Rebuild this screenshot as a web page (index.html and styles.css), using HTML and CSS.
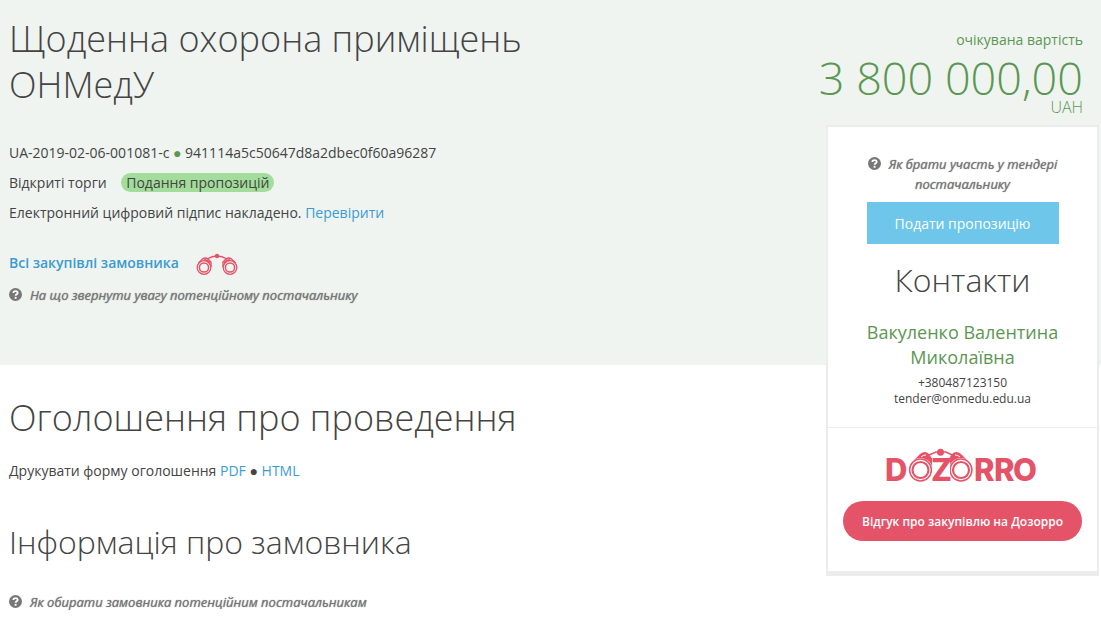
FILE: index.html
```html
<!DOCTYPE html>
<html lang="uk">
<head>
    <meta charset="UTF-8">
    <meta name="viewport" content="width=device-width, initial-scale=1.0">
    <title>Щоденна охорона приміщень ОНМедУ</title>
    <link rel="stylesheet" href="styles.css">
</head>
<body>
    <!-- shared icons -->
    <svg class="sprite" aria-hidden="true">
        <symbol id="question" viewBox="0 0 12 12">
            <circle cx="6" cy="6" r="6" fill="#777"/>
            <path d="M4 4.700C4 2.200 8 2.300 8 4.500C8 5.800 6.100 5.700 6.100 7.200" fill="none" stroke="#fff" stroke-width="1.700"/>
            <rect x="5.200" y="8.200" width="1.800" height="1.700" fill="#fff"/>
        </symbol>
    </svg>

    <main class="tender">
        <header class="hero">
            <div class="hero-main">
                <h1>Щоденна охорона приміщень ОНМедУ</h1>
                <ul class="details">
                    <li>UA-2019-02-06-001081-c <span class="dot">●</span> 941114a5c50647d8a2dbec0f60a96287</li>
                    <li>Відкриті торги <span class="status">Подання пропозицій</span></li>
                    <li>Електронний цифровий підпис накладено. <a href="#">Перевірити</a></li>
                </ul>
                <div class="customer">
                    <a href="#">Всі закупівлі замовника</a>
                    <svg class="binoculars" viewBox="0 0 42 24" fill="none" stroke="#e55368">
                        <circle cx="8" cy="14.500" r="6.800" stroke-width="1.300"/>
                        <circle cx="8" cy="14.500" r="4.600" stroke-width="1.500"/>
                        <circle cx="34" cy="14.500" r="6.800" stroke-width="1.300"/>
                        <circle cx="34" cy="14.500" r="4.600" stroke-width="1.500"/>
                        <path d="M2.500 10L6.500 6Q9 4 12 6L15 9V14M39.500 10L35.500 6Q33 4 30 6L27 9V14" stroke-width="1.400"/>
                        <path d="M8 7Q11 6 14 10M34 7Q31 6 28 10" stroke-width="1.800"/>
                        <path d="M11 6Q16 3 21 3T31 6" stroke-width="1.300"/>
                        <circle cx="21" cy="3" r="2.200" fill="#e55368" stroke="none"/>
                    </svg>
                </div>
                <a class="hint" href="#"><svg class="icon"><use href="#question"/></svg>На що звернути увагу потенційному постачальнику</a>
            </div>
        </header>

        <aside class="side">
            <div class="price">
                <div class="price-label">очікувана вартість</div>
                <div class="price-value">3 800 000,00</div>
                <div class="price-currency">UAH</div>
            </div>
            <div class="card">
                <div class="card-top">
                    <a class="hint" href="#"><svg class="icon"><use href="#question"/></svg>Як брати участь у тендері постачальнику</a>
                    <button class="btn-offer" type="button">Подати пропозицію</button>
                    <h3>Контакти</h3>
                    <p class="person">Вакуленко Валентина Миколаївна</p>
                    <p class="contact">+380487123150<br>tender@onmedu.edu.ua</p>
                </div>
                <div class="card-bottom">
                    <svg class="dozorro" viewBox="0 0 154 35" role="img" aria-label="Dozorro">
                        <path d="M24 16L34 6Q39 2 43 6L47 12V22H35ZM85 16L75 6Q70 2 66 6L62 12V22H75Z" fill="#e55368"/>
                        <circle cx="34.500" cy="22" r="12" fill="#fff"/>
                        <circle cx="75" cy="22" r="12" fill="#fff"/>
                        <g fill="none" stroke="#e55368">
                            <circle cx="34.500" cy="22" r="10.900" stroke-width="1.500"/>
                            <circle cx="34.500" cy="22" r="8" stroke-width="2.200"/>
                            <circle cx="75" cy="22" r="10.900" stroke-width="1.500"/>
                            <circle cx="75" cy="22" r="8" stroke-width="2.200"/>
                            <path d="M43 7L50 4H60L66 7" stroke-width="1.500"/>
                        </g>
                        <path d="M35 9Q37 7 40 7M74 9Q72 7 69 7" fill="none" stroke="#fff"/>
                        <circle cx="54.500" cy="4.200" r="3.500" fill="#e55368"/>
                        <path d="M46 11H64V34H46Z" fill="#fff"/>
                        <g class="dozorro-text">
                            <text x="-1" y="33">D</text>
                            <text x="45" y="33">Z</text>
                            <text x="88" y="33">R</text>
                            <text x="108" y="33">R</text>
                            <text x="127" y="33">O</text>
                        </g>
                    </svg>
                    <button class="btn-review" type="button">Відгук про закупівлю на Дозорро</button>
                </div>
            </div>
        </aside>

        <div class="content">
            <section>
                <h2>Оголошення про проведення</h2>
                <p>Друкувати форму оголошення <a href="#">PDF</a> ● <a href="#">HTML</a></p>
            </section>
            <section>
                <h3>Інформація про замовника</h3>
                <a class="hint" href="#"><svg class="icon"><use href="#question"/></svg>Як обирати замовника потенційним постачальникам</a>
            </section>
        </div>
    </main>
</body>
</html>
```

FILE: styles.css
```css
* {
    box-sizing: border-box;
}

body {
    margin: 0;
    font-family: "Open Sans", "Liberation Sans", sans-serif;
    font-size: 14px;
    line-height: 20px;
    color: #444;
    background: #fff;
}

h1, h2, h3, p, ul {
    margin: 0;
    padding: 0;
}

h1, h2, h3 {
    font-weight: 300;
}

h1, h2 {
    font-size: 36px;
    line-height: 46px;
}

h3 {
    font-size: 32px;
    line-height: 40px;
}

a {
    color: #3b9bd3;
    text-decoration: none;
}

.sprite {
    display: none;
}

/* the hero runs under the side column, which spans both rows */
.tender {
    display: grid;
    grid-template-columns: minmax(0, 1fr) 285px;
    grid-template-rows: auto 1fr;
}

.hero {
    grid-area: 1 / 1 / 2 / 3;
    padding: 16px 290px 60px 9px;
    background: #eff4f1;
}

.hero-main {
    max-width: 560px;
}

.details {
    list-style: none;
    margin-top: 30px;
    line-height: 30px;
}

.dot {
    color: #5b9752;
}

.status {
    margin-left: 11px;
    padding: 0 5px;
    border-radius: 10px;
    background: #a3dd9b;
}

.customer {
    display: flex;
    align-items: flex-start;
    gap: 17px;
    margin-top: 25px;
    font-weight: 600;
}

.binoculars {
    width: 42px;
    height: 24px;
}

.hint {
    display: block;
    font-size: 13px;
    font-style: italic;
    font-weight: 500;
    color: #777;
    text-shadow: 0 0 1px #777;
}

.icon {
    width: 13px;
    height: 13px;
    margin-right: 8px;
    vertical-align: -1px;
}

.hero .hint {
    margin-top: 8px;
}

.side {
    grid-area: 1 / 2 / 3 / 3;
    padding: 30px 2px 0 0;
}

.price {
    padding-right: 16px;
    text-align: right;
    white-space: nowrap;
    color: #5b9752;
}

.price-value {
    margin-top: 8px;
    font-size: 45px;
    font-weight: 300;
    line-height: 40px;
}

.price-currency {
    font-size: 16px;
    font-weight: 300;
    line-height: 18px;
}

.card {
    margin: 9px 0 0 10px;
    border: 2px solid #ececec;
    border-bottom-width: 5px;
    background: #fff;
    text-align: center;
}

.card-top {
    padding: 27px 35px 20px;
    border-bottom: 1px solid #ececec;
}

button {
    border: none;
    font-family: inherit;
    color: #fff;
    cursor: pointer;
}

.btn-offer {
    width: 192px;
    height: 42px;
    margin: 8px 0 16px;
    background: #6ec6ea;
    font-size: 14px;
}

.person {
    margin-top: 20px;
    font-size: 18px;
    line-height: 25px;
    color: #5b9752;
}

.contact {
    margin-top: 5px;
    font-size: 12px;
    line-height: 16px;
}

.card-bottom {
    padding: 20px 15px 30px;
}

.dozorro {
    display: block;
    width: 154px;
    height: 35px;
    margin: 0 auto 18px;
    overflow: visible;
}

.dozorro-text {
    font-family: Inter, sans-serif;
    font-size: 31px;
    font-weight: 800;
    fill: #e55368;
}

.btn-review {
    width: 100%;
    height: 40px;
    border-radius: 20px;
    background: #e55368;
    font-size: 12px;
    font-weight: 600;
}

.content {
    grid-area: 2 / 1 / 3 / 2;
    padding: 30px 9px 10px;
}

.content p {
    margin-top: 20px;
}

.content section + section {
    margin-top: 41px;
}

.content .hint {
    margin-top: 30px;
}
```
